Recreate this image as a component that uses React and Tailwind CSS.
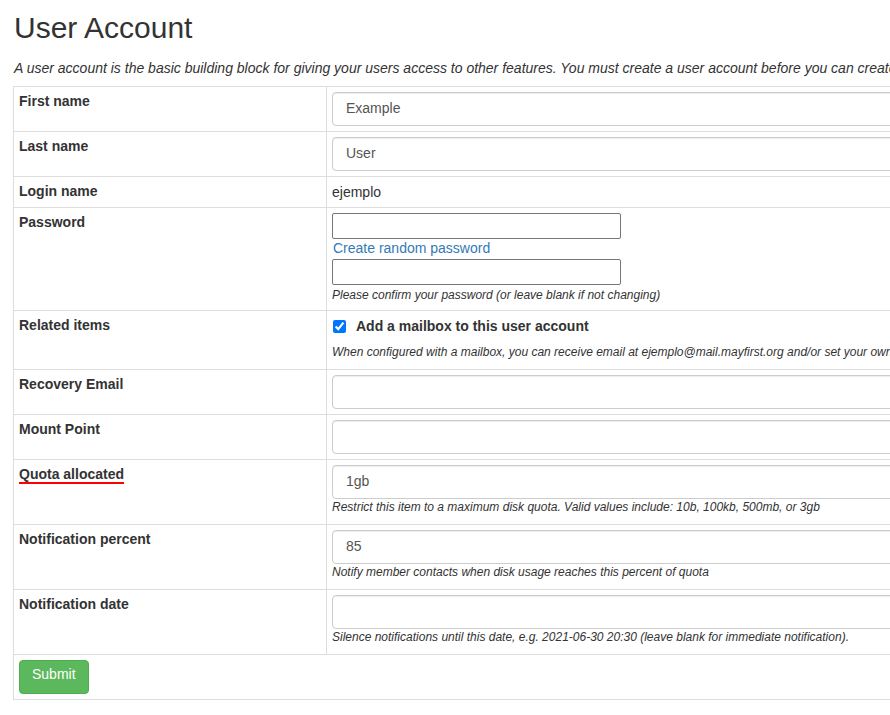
import React from "react";

const font = { fontFamily: '"Liberation Sans", Arial, sans-serif' };

// ---------------- Small pieces ----------------
const FormInput = ({ value = "" }) => (
  <input
    type="text"
    defaultValue={value}
    className="block w-full h-[34px] pl-[13px] pr-3 pt-[5px] pb-[7px] text-[14px] text-[#555] bg-white border border-[#ccc] rounded-[4px] shadow-[inset_0_1px_1px_rgba(0,0,0,0.075)] outline-none"
  />
);

const Help = ({ children, className = "" }) => (
  <p className={`text-[12px] leading-[17px] italic text-[#333] whitespace-nowrap ${className}`}>
    {children}
  </p>
);

const Row = ({ label, children, underline }) => (
  <tr>
    <th className="w-[313px] border border-[#ddd] pt-[4px] pb-[6px] px-[5px] text-left align-top font-bold text-[14px] leading-5 text-[#333]">
      {underline ? (
        <span className="border-b-2 border-[#f00]">{label}</span>
      ) : (
        label
      )}
    </th>
    <td className="border border-[#ddd] p-[5px] align-top text-[14px] leading-5 text-[#333]">
      {children}
    </td>
  </tr>
);

const App = () => {
  return (
    <div style={font} className="w-[890px] h-[715px] overflow-hidden bg-white text-[#333]">
      <div className="pl-[14px] pt-[11px]">
        <h1 className="text-[30px] leading-[33px] font-normal">User Account</h1>
        <p className="mt-[14px] text-[14px] leading-5 italic whitespace-nowrap">
          A user account is the basic building block for giving your users access to other features. You must create a user account before you can create an email address.
        </p>
      </div>

      <table className="ml-[13px] mt-[8px] w-[1200px] border-collapse border border-[#ddd]">
        <tbody>
          <Row label="First name">
            <FormInput value="Example" />
          </Row>
          <Row label="Last name">
            <FormInput value="User" />
          </Row>
          <Row label="Login name">ejemplo</Row>
          <Row label="Password">
            <input
              type="password"
              className="block w-[289px] h-[26px] border border-[#767676] rounded-[2px] bg-white"
            />
            <a href="#" className="block text-[#337ab7] leading-5 pl-[1px] -mt-[1px] mb-[1px]">
              Create random password
            </a>
            <input
              type="password"
              className="block w-[289px] h-[26px] border border-[#767676] rounded-[2px] bg-white"
            />
            <Help className="mt-[2px] mb-[1px]">
              Please confirm your password (or leave blank if not changing)
            </Help>
          </Row>
          <Row label="Related items">
            <label className="flex items-center gap-[10px] font-bold text-[14px] leading-5">
              <input
                type="checkbox"
                defaultChecked
                className="w-[13px] h-[13px] ml-[1px] m-0"
              />
              Add a mailbox to this user account
            </label>
            <Help className="mt-[8px] mb-[3px]">
              When configured with a mailbox, you can receive email at ejemplo@mail.mayfirst.org and/or set your own email address to forward to this account.
            </Help>
          </Row>
          <Row label="Recovery Email">
            <FormInput />
          </Row>
          <Row label="Mount Point">
            <FormInput />
          </Row>
          <Row label="Quota allocated" underline>
            <FormInput value="1gb" />
            <Help className="mb-[3px]">
              Restrict this item to a maximum disk quota. Valid values include: 10b, 100kb, 500mb, or 3gb
            </Help>
          </Row>
          <Row label="Notification percent">
            <FormInput value="85" />
            <Help className="mb-[3px]">
              Notify member contacts when disk usage reaches this percent of quota
            </Help>
          </Row>
          <Row label="Notification date">
            <FormInput />
            <Help className="mb-[3px]">
              Silence notifications until this date, e.g. 2021-06-30 20:30 (leave blank for immediate notification).
            </Help>
          </Row>
          <tr>
            <td colSpan={2} className="border border-[#ddd] p-[5px]">
              <button
                type="submit"
                className="h-[34px] px-3 pb-[5px] text-[14px] text-white bg-[#5cb85c] border border-[#4cae4c] rounded-[4px]"
              >
                Submit
              </button>
            </td>
          </tr>
        </tbody>
      </table>
    </div>
  );
};

export default App;
